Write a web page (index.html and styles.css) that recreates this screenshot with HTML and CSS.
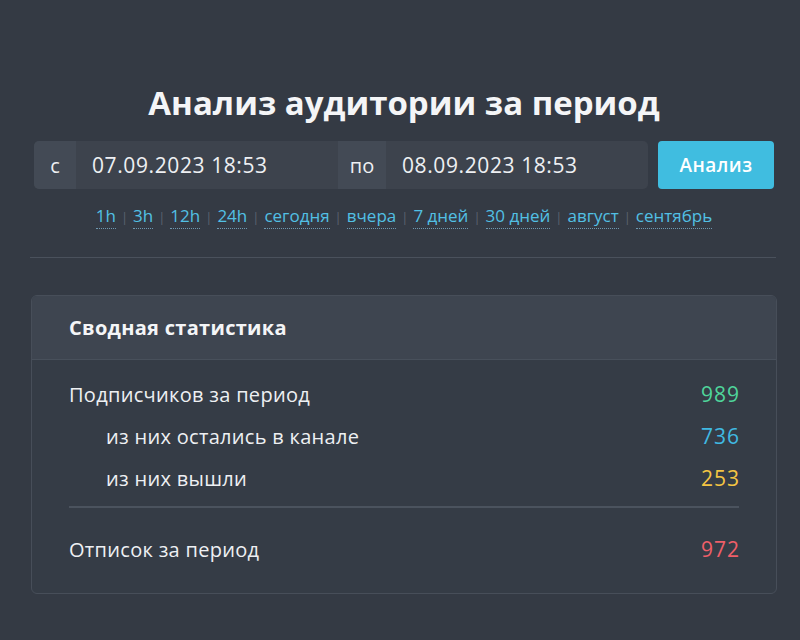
FILE: index.html
```html
<!DOCTYPE html>
<html lang="ru">
<head>
<meta charset="utf-8">
<link rel="stylesheet" href="styles.css">
</head>
<body>
<div class="page">
  <h1 class="title">Анализ аудитории за период</h1>
  <div class="form-row">
    <div class="input-group">
      <span class="addon addon-c">с</span>
      <span class="field">07.09.2023 18:53</span>
      <span class="addon addon-po">по</span>
      <span class="field">08.09.2023 18:53</span>
    </div>
    <button class="btn">Анализ</button>
  </div>
  <div class="presets">
    <a class="preset">1h</a><span class="sep">|</span><a class="preset">3h</a><span class="sep">|</span><a class="preset">12h</a><span class="sep">|</span><a class="preset">24h</a><span class="sep">|</span><a class="preset">сегодня</a><span class="sep">|</span><a class="preset">вчера</a><span class="sep">|</span><a class="preset">7 дней</a><span class="sep">|</span><a class="preset">30 дней</a><span class="sep">|</span><a class="preset">август</a><span class="sep">|</span><a class="preset">сентябрь</a>
  </div>
  <hr class="divider">
  <div class="card">
    <div class="card-header">Сводная статистика</div>
    <div class="card-body">
      <div class="row"><span>Подписчиков за период</span><span class="num green">989</span></div>
      <div class="row sub"><span>из них остались в канале</span><span class="num blue">736</span></div>
      <div class="row sub"><span>из них вышли</span><span class="num yellow">253</span></div>
      <hr class="inner">
      <div class="row"><span>Отписок за период</span><span class="num red">972</span></div>
    </div>
  </div>
</div>
</body>
</html>
```
FILE: styles.css
```css
* { box-sizing: border-box; }
html, body { margin: 0; padding: 0; }
body {
  background: #343a44;
  color: #f2f3f5;
  font-family: "Open Sans", "Noto Sans", sans-serif;
  width: 800px;
  height: 640px;
  overflow: hidden;
}
.page {
  padding: 80px 23px 0 31px;
}
.title {
  margin: 0;
  text-align: center;
  font-size: 33px;
  font-weight: 700;
  line-height: 46px;
  color: #f4f5f7;
}
.form-row {
  display: flex;
  gap: 10px;
  margin-top: 15px;
  padding-left: 3px;
}
.input-group {
  display: flex;
  width: 614px;
  height: 48px;
  border-radius: 5px;
  overflow: hidden;
  background: #3d434d;
}
.addon {
  display: flex;
  align-items: center;
  justify-content: center;
  background: #434a55;
  font-size: 20px;
  color: #eef0f3;
}
.addon-c { width: 42px; }
.addon-po { width: 48px; }
.field {
  display: flex;
  align-items: center;
  width: 262px;
  padding-left: 16px;
  font-size: 21px;
  letter-spacing: 0.6px;
  color: #eef0f3;
}
.btn {
  width: 116px;
  height: 48px;
  border: 0;
  border-radius: 4px;
  background: #40bde0;
  color: #fff;
  font-family: inherit;
  font-size: 19px;
  letter-spacing: 0.5px;
  font-weight: 600;
}
.presets {
  display: flex;
  justify-content: center;
  align-items: baseline;
  margin-top: 15px;
  font-size: 17px;
  line-height: 24px;
}
.preset {
  color: #52c0e4;
  border-bottom: 1px dotted #6f98b0;
}
.sep {
  color: #5b6370;
  font-size: 13px;
  margin: 0 5px;
}
.divider {
  border: 0;
  border-top: 1px solid #4a515c;
  margin: 28px 0 0 -1px;
  width: 746px;
}
.card {
  margin-top: 37px;
  width: 746px;
  border: 1px solid #474e59;
  border-radius: 6px;
  overflow: hidden;
  background: #353c46;
}
.card-header {
  height: 64px;
  background: #3e4550;
  border-bottom: 1px solid #48505b;
  display: flex;
  align-items: center;
  padding-left: 37px;
  font-size: 20px;
  letter-spacing: 0.3px;
  font-weight: 700;
  color: #f4f5f7;
}
.card-body {
  padding: 13px 37px 23px 37px;
}
.row {
  display: flex;
  justify-content: space-between;
  align-items: center;
  height: 42px;
  font-size: 20px;
  letter-spacing: 0.3px;
  color: #eef0f3;
}
.row.sub { padding-left: 37px; }
.num { font-size: 21px; letter-spacing: 1px; margin-right: -1px; }
.green { color: #4fd59b; }
.blue { color: #40b9e2; }
.yellow { color: #f4c543; }
.red { color: #ef5f69; }
.inner {
  border: 0;
  border-top: 2px solid #4b535e;
  margin: 7px 0 20px 0;
}
```
